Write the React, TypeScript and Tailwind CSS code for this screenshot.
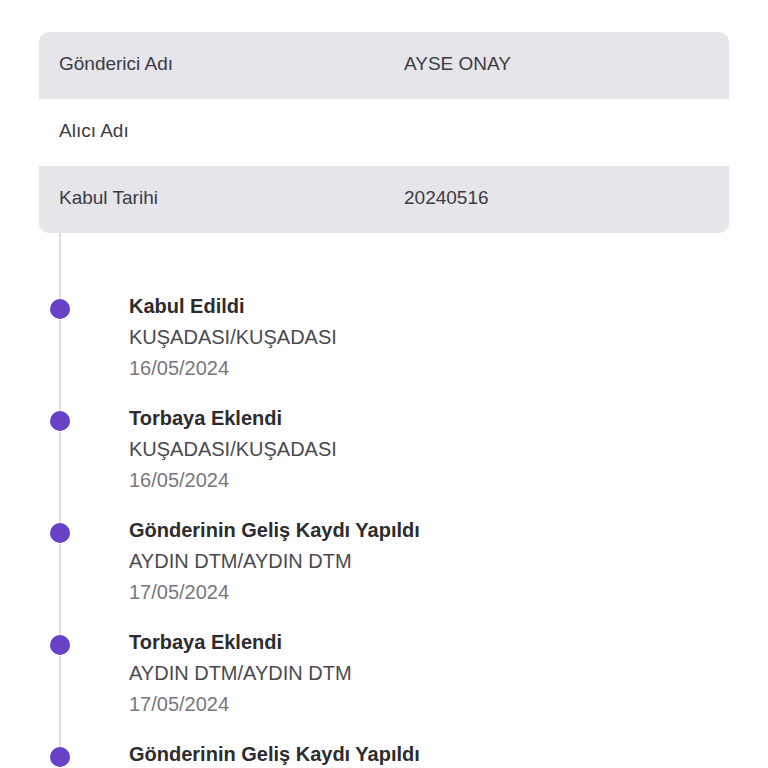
import React from "react";

const rows = [
  { label: "Gönderici Adı", value: "AYSE ONAY", shaded: true },
  { label: "Alıcı Adı", value: "", shaded: false },
  { label: "Kabul Tarihi", value: "20240516", shaded: true },
];

const events = [
  { title: "Kabul Edildi", place: "KUŞADASI/KUŞADASI", date: "16/05/2024" },
  { title: "Torbaya Eklendi", place: "KUŞADASI/KUŞADASI", date: "16/05/2024" },
  { title: "Gönderinin Geliş Kaydı Yapıldı", place: "AYDIN DTM/AYDIN DTM", date: "17/05/2024" },
  { title: "Torbaya Eklendi", place: "AYDIN DTM/AYDIN DTM", date: "17/05/2024" },
  { title: "Gönderinin Geliş Kaydı Yapıldı", place: "AYDIN DTM/AYDIN DTM", date: "17/05/2024" },
];

export default function App() {
  return (
    <div
      className="min-h-screen bg-white px-[39px] pt-[32px]"
      style={{ fontFamily: '"Liberation Sans", Arial, sans-serif' }}
    >
      <div className="rounded-[10px] overflow-hidden">
        {rows.map((r, i) => (
          <div
            key={i}
            className={`flex h-[67px] items-center pl-[20px] pb-[2px] text-[19px] text-[#3c3c43] ${
              r.shaded ? "bg-[#e5e5ea]" : "bg-white"
            }`}
          >
            <div className="w-[345px] shrink-0">{r.label}</div>
            <div>{r.value}</div>
          </div>
        ))}
      </div>
      <div className="ml-[20px] border-l-2 border-[#dedee2] pt-[58px] pb-[40px] flex flex-col gap-[19px]">
        {events.map((e, i) => (
          <div key={i} className="relative pl-[68px] leading-[31px]">
            <div className="absolute left-[-11px] top-[8px] h-[20px] w-[20px] rounded-full bg-[#6841c6]" />
            <div className="text-[20px] font-semibold text-[#2c2c2e]">{e.title}</div>
            <div className="text-[20px] text-[#4a4a4e]">{e.place}</div>
            <div className="text-[20px] text-[#77777c]">{e.date}</div>
          </div>
        ))}
      </div>
    </div>
  );
}
